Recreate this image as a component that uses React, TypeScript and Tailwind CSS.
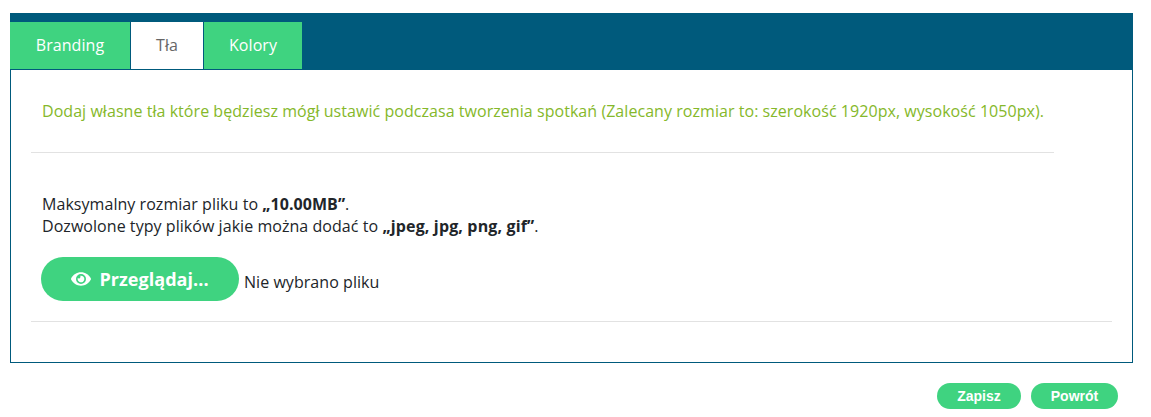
import React from 'react';

const tabs = ['Branding', 'Tła', 'Kolory'];

function EyeIcon() {
  return (
    <svg viewBox="0 0 576 512" className="w-[20px] h-[18px]" fill="currentColor">
      <path d="M572.52 241.4C518.29 135.59 410.93 64 288 64S57.68 135.64 3.48 241.41a32.35 32.35 0 0 0 0 29.19C57.71 376.41 165.07 448 288 448s230.32-71.64 284.52-177.41a32.35 32.35 0 0 0 0-29.19zM288 400a144 144 0 1 1 144-144 143.93 143.93 0 0 1-144 144zm0-240a95.31 95.31 0 0 0-25.31 3.79 47.85 47.85 0 0 1-66.9 66.9A95.78 95.78 0 1 0 288 160z" />
    </svg>
  );
}

export default function App() {
  return (
    <div className="h-[417px] w-[1151px] overflow-hidden bg-white pt-[13px] pl-[10px] font-['Open_Sans',sans-serif] text-[16px] tracking-[0.05px] text-[#212529]">
      <div className="w-[1123px] h-[350px] border border-[#005a7c] border-t-0">
        <div className="bg-[#005a7c] pt-[9px] pb-px -ml-px -mr-px flex">
          {tabs.map((tab, i) => (
            <div
              key={tab}
              className={
                i === 1
                  ? 'w-[74px] h-[47px] pb-[2px] bg-white text-[#666666] text-[16px] flex items-center justify-center border-x border-[#005a7c]'
                  : i === 0
                    ? 'w-[120px] h-[47px] pb-[2px] bg-[#3fd380] text-white text-[16px] font-medium flex items-center justify-center'
                    : 'w-[98px] h-[47px] pb-[2px] bg-[#3fd380] text-white text-[16px] font-medium flex items-center justify-center'
              }
            >
              {tab}
            </div>
          ))}
        </div>
        <div className="pl-[20px] pr-[20px]">
          <div className="w-[1023px] h-[83px] border-b border-[#e2e2e2] pt-[31px] pl-[11px] text-[#85b82a] leading-[21px]">
            Dodaj własne tła które będziesz mógł ustawić podczasa tworzenia spotkań (Zalecany rozmiar to: szerokość 1920px, wysokość 1050px).
          </div>
          <div className="h-[169px] border-b border-[#e2e2e2] pt-[40px] pl-[11px]">
            <p className="leading-[22px]">Maksymalny rozmiar pliku to <b>„10.00MB”</b>.</p>
            <p className="leading-[22px]">Dozwolone typy plików jakie można dodać to <b className="tracking-[0.15px]">„jpeg, jpg, png, gif”</b>.</p>
            <div className="mt-[20px] -ml-px flex items-center gap-[5px]">
              <div className="w-[198px] h-[44px] rounded-full bg-[#3fd380] text-white text-[18px] font-bold flex items-center justify-center gap-[8px]">
                <EyeIcon />
                Przeglądaj...
              </div>
              <span className="mt-[6px]">Nie wybrano pliku</span>
            </div>
          </div>
        </div>
      </div>
      <div className="mt-[20px] w-[1108px] flex justify-end gap-[10px] font-['Liberation_Sans',sans-serif] text-[14px] tracking-normal font-bold text-white">
        <div className="w-[84px] h-[26px] rounded-full bg-[#3fd380] flex items-center justify-center">Zapisz</div>
        <div className="w-[87px] h-[26px] rounded-full bg-[#3fd380] flex items-center justify-center">Powrót</div>
      </div>
    </div>
  );
}
